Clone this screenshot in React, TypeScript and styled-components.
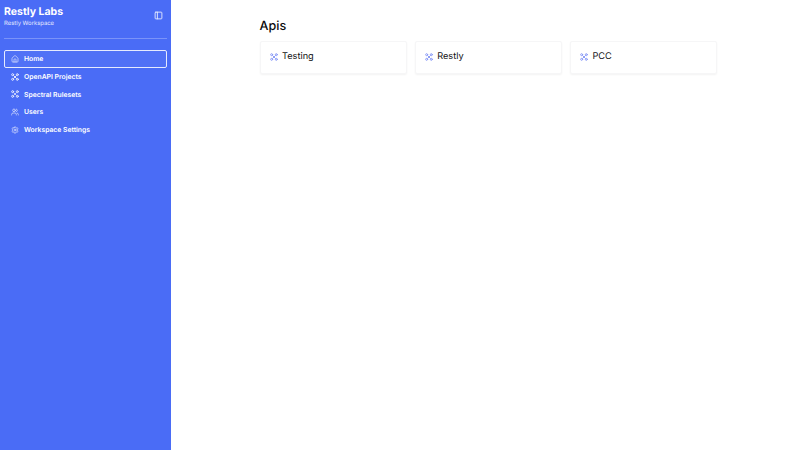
import React from "react";
import styled, { createGlobalStyle } from "styled-components";
import { House, Users, Settings, PanelLeft } from "lucide-react";

const Global = createGlobalStyle`
  html, body { margin: 0; padding: 0; background: #fff; }
  body { font-family: Inter, "Liberation Sans", sans-serif; text-rendering: geometricPrecision; }
  #root { height: 450px; }
`;

const Page = styled.div`
  display: flex;
  width: 800px;
  height: 450px;
  overflow: hidden;
`;

const Sidebar = styled.aside`
  box-sizing: border-box;
  width: 171px;
  flex: none;
  background: #4a6cf6;
  color: #fff;
  padding: 5px 4px;
  display: flex;
  flex-direction: column;
`;

const Header = styled.header`
  display: flex;
  justify-content: space-between;
  align-items: flex-start;
  height: 33px;
  border-bottom: 1px solid #7a93f9;
`;

const Brand = styled.div`
  display: flex;
  flex-direction: column;
`;

const BrandName = styled.div`
  font-size: 10.5px;
  line-height: 13px;
  font-weight: 700;
`;

const BrandSub = styled.div`
  font-size: 5.9px;
  line-height: 8px;
  margin-top: 1.5px;
  font-weight: 400;
  color: #e4e9fe;
`;

const ToggleButton = styled.span`
  display: flex;
  margin: 6px 4.5px 0 0;
  color: #e8ecfe;
`;

const Nav = styled.nav`
  display: flex;
  flex-direction: column;
  margin-top: 11px;
`;

const NavItem = styled.div<{ $active?: boolean }>`
  box-sizing: border-box;
  height: 17.7px;
  display: flex;
  align-items: center;
  gap: 5px;
  padding-left: 6px;
  font-size: 6.8px;
  font-weight: 600;
  color: #fff;
  border-radius: 2px;
  border: 1px solid ${(p) => (p.$active ? "#e6ebfe" : "transparent")};
  background: ${(p) => (p.$active ? "#5071f6" : "transparent")};
  svg { flex: none; color: #e4e9fe; }
`;

const Main = styled.main`
  flex: 1;
  padding: 17.5px 83px 0 88.5px;
`;

const Title = styled.h1`
  margin: 0;
  font-size: 12.6px;
  line-height: 17px;
  font-weight: 500;
  color: #0a0a0a;
`;

const Cards = styled.div`
  display: grid;
  grid-template-columns: repeat(3, 147.5px);
  column-gap: 7.7px;
  margin-top: 6.5px;
`;

const Card = styled.div`
  box-sizing: border-box;
  height: 32.5px;
  border: 1px solid #f6f6f7;
  border-radius: 2px;
  box-shadow: 0 1px 2px rgba(0, 0, 0, 0.05);
  display: flex;
  align-items: flex-start;
  padding: 8.5px 9.5px;
  gap: 4px;
`;

const CardLabel = styled.span`
  font-size: 9.2px;
  line-height: 12px;
  font-weight: 400;
  color: #111114;
`;

const CardIcon = styled.span`
  display: flex;
  margin-top: 2px;
  color: #8c9cf6;
`;

const ApiIcon = ({ dashed }: { dashed?: boolean }) => (
  <svg width="8" height="8" viewBox="0 0 24 24" fill="none" stroke="currentColor" strokeWidth="3" strokeLinecap="round">
    <circle cx="5" cy="5" r="3" />
    <circle cx="19" cy="5" r="3" />
    <circle cx="5" cy="19" r="3" />
    <circle cx="19" cy="19" r="3" />
    <path d={dashed ? "M9 9l1.5 1.5M15 9l-1.5 1.5M9 15l1.5-1.5M15 15l-1.5-1.5" : "M8 8l8 8M16 8l-8 8"} />
  </svg>
);

const items = [
  { label: "OpenAPI Projects", icon: <ApiIcon /> },
  { label: "Spectral Rulesets", icon: <ApiIcon dashed /> },
  { label: "Users", icon: <Users size={8} strokeWidth={2} /> },
  { label: "Workspace Settings", icon: <Settings size={8} strokeWidth={2} /> },
];

const apis = ["Testing", "Restly", "PCC"];

export default function App() {
  return (
    <Page>
      <Global />
      <Sidebar>
        <Header>
          <Brand>
            <BrandName>Restly Labs</BrandName>
            <BrandSub>Restly Workspace</BrandSub>
          </Brand>
          <ToggleButton>
            <PanelLeft size={9} strokeWidth={2.4} />
          </ToggleButton>
        </Header>
        <Nav>
          <NavItem $active>
            <House size={8} strokeWidth={2} />
            Home
          </NavItem>
          {items.map((it) => (
            <NavItem key={it.label}>
              {it.icon}
              {it.label}
            </NavItem>
          ))}
        </Nav>
      </Sidebar>
      <Main>
        <Title>Apis</Title>
        <Cards>
          {apis.map((a) => (
            <Card key={a}>
              <CardIcon>
                <ApiIcon />
              </CardIcon>
              <CardLabel>{a}</CardLabel>
            </Card>
          ))}
        </Cards>
      </Main>
    </Page>
  );
}
